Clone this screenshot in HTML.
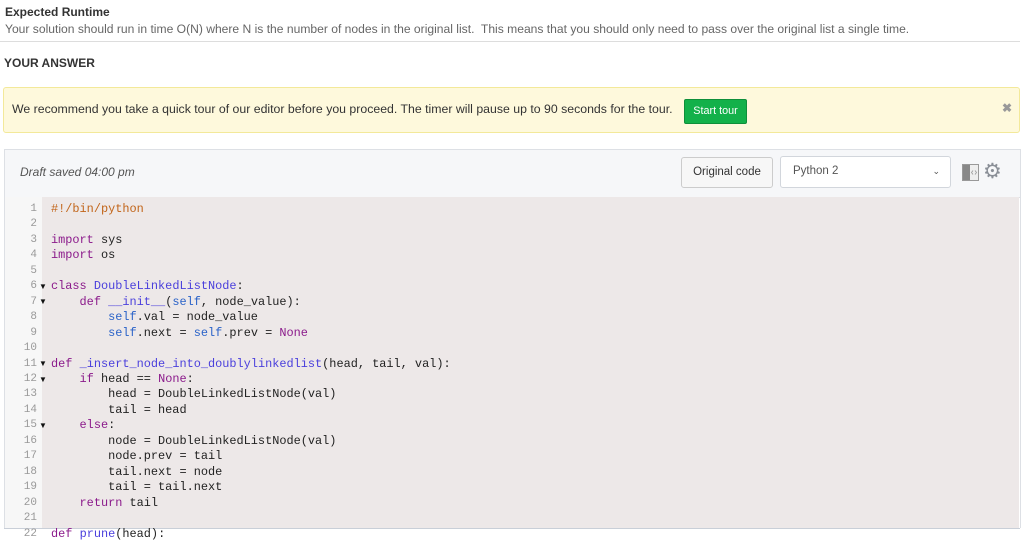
<!DOCTYPE html>
<html><head><style>
body{margin:0;width:1024px;height:541px;overflow:hidden;background:#fff;font-family:"Liberation Sans",sans-serif;position:relative}
.a{position:absolute}
.code{font-family:"Liberation Mono",monospace;font-size:11.9px;line-height:15.45px;white-space:pre;color:#222}
.k{color:#8b1a8b}.d{color:#4a3fdc}.s{color:#2a62c8}.c{color:#c2651a}
.ln{font-family:"Liberation Mono",monospace;font-size:11px;line-height:15.45px;color:#999;text-align:right;white-space:pre}
</style></head><body>
<div class="a" style="left:5px;top:5px;font-size:12px;font-weight:bold;color:#333">Expected Runtime</div>
<div class="a" style="left:5px;top:22px;font-size:12.1px;color:#666">Your solution should run in time O(N) where N is the number of nodes in the original list.&nbsp; This means that you should only need to pass over the original list a single time.</div>
<div class="a" style="left:0;top:41px;width:1020px;height:1px;background:#ddd"></div>
<div class="a" style="left:4px;top:56px;font-size:12px;font-weight:bold;color:#333">YOUR ANSWER</div>
<div class="a" style="left:3px;top:87px;width:1015px;height:44px;background:#fef9dc;border:1px solid #f3e99a;border-radius:3px"></div>
<div class="a" style="left:12px;top:102px;font-size:12.3px;color:#333">We recommend you take a quick tour of our editor before you proceed. The timer will pause up to 90 seconds for the tour.</div>
<div class="a" style="left:684px;top:99px;width:61px;height:23px;background:#13b14a;border:1px solid #0e8f3a;border-radius:2px;color:#fff;font-size:10.8px;line-height:22px;text-align:center">Start tour</div>
<div class="a" style="left:1002px;top:101px;font-size:12px;color:#999;font-weight:bold">✖</div>
<div class="a" style="left:4px;top:149px;width:1015px;height:47px;background:#f6f7f9;border:1px solid #dde0e5"></div>
<div class="a" style="left:20px;top:165px;font-size:12px;font-style:italic;color:#555">Draft saved 04:00 pm</div>
<div class="a" style="left:681px;top:157px;width:90px;height:29px;background:#f7f7f7;border:1px solid #ccc;border-radius:3px;font-size:11.5px;line-height:29px;text-align:center;color:#333">Original code</div>
<div class="a" style="left:780px;top:156px;width:169px;height:30px;background:#fff;border:1px solid #d2d6dc;border-radius:3px;font-size:11.5px;line-height:28px;color:#555;text-indent:12px">Python 2<span style="position:absolute;right:10px;top:0;font-size:9px">&#8964;</span></div>
<svg class="a" style="left:962px;top:164px" width="17" height="17" viewBox="0 0 17 17"><rect x="0.5" y="0.5" width="16" height="16" fill="#eee" stroke="#999"/><rect x="1" y="1" width="7" height="15" fill="#888"/><path d="M11 6.5L9.5 8.5 11 10.5M13 6.5l1.5 2-1.5 2" stroke="#999" fill="none" stroke-width="0.8"/></svg>
<div class="a" style="left:983px;top:159px;font-size:21px;color:#8a8f97">⚙</div>
<div class="a" style="left:4px;top:197px;width:1015px;height:331px;border-left:1px solid #dde0e5;border-right:1px solid #dde0e5"></div>
<div class="a" style="left:5px;top:197px;width:37px;height:331px;background:#f7f7f7"></div>
<div class="a" style="left:42px;top:197px;width:977px;height:331px;background:#ede8e8"></div>
<div class="a" style="left:4px;top:529px;width:1016px;height:12px;background:#fff"></div>
<div class="a" style="left:4px;top:528px;width:1016px;height:1px;background:#c9cfd8"></div>
<div class="a ln" style="left:5px;top:202px;width:32px">1
2
3
4
5
6
7
8
9
10
11
12
13
14
15
16
17
18
19
20
21
22</div>
<div class="a" style="left:39px;top:279px;font-size:8px;line-height:15.45px;white-space:pre;color:#111">▼
▼



▼
▼


▼</div>
<div class="a code" style="left:51px;top:202px"><span class="c">#!/bin/python</span>

<span class="k">import</span> sys
<span class="k">import</span> os

<span class="k">class</span> <span class="d">DoubleLinkedListNode</span>:
    <span class="k">def</span> <span class="d">__init__</span>(<span class="s">self</span>, node_value):
        <span class="s">self</span>.val = node_value
        <span class="s">self</span>.next = <span class="s">self</span>.prev = <span class="k">None</span>

<span class="k">def</span> <span class="d">_insert_node_into_doublylinkedlist</span>(head, tail, val):
    <span class="k">if</span> head == <span class="k">None</span>:
        head = DoubleLinkedListNode(val)
        tail = head
    <span class="k">else</span>:
        node = DoubleLinkedListNode(val)
        node.prev = tail
        tail.next = node
        tail = tail.next
    <span class="k">return</span> tail

<span class="k">def</span> <span class="d">prune</span>(head):</div>
</body></html>
